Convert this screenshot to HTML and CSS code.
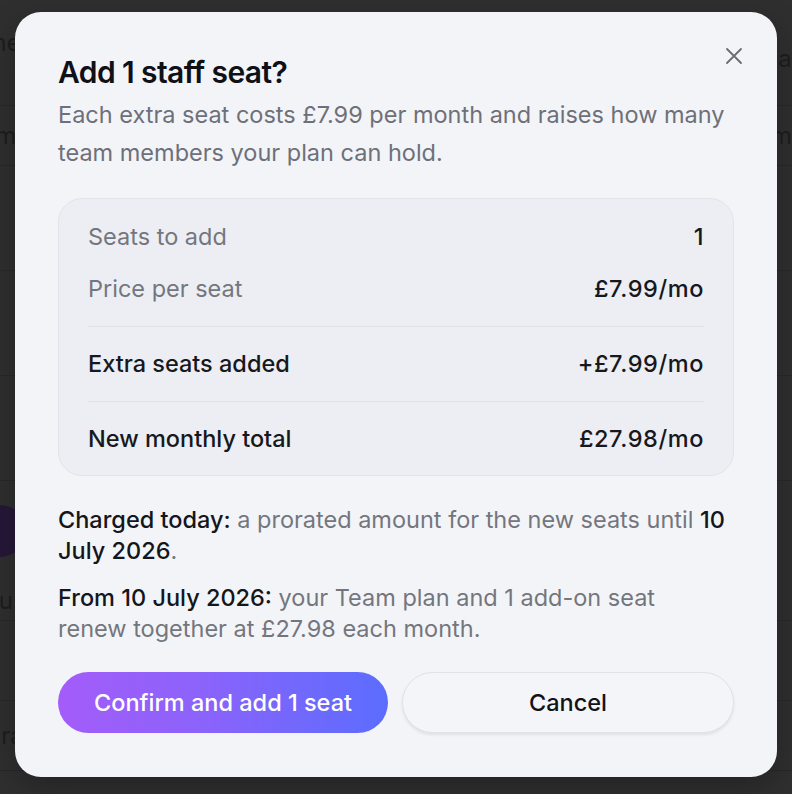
FILE: index.html
```html
<!DOCTYPE html>
<html lang="en">
<head>
    <meta charset="UTF-8">
    <meta name="viewport" content="width=device-width, initial-scale=1.0">
    <title>Add staff seat</title>
    <link rel="stylesheet" href="styles.css">
</head>
<body>
    <!-- Page behind the dialog, dimmed by the overlay -->
    <div class="page">
        <div class="page-row r1"><span class="two-line">Name<br>Info</span><span>Seats</span></div>
        <div class="page-row r2"><span>Team plan</span><span>Admin</span></div>
        <div class="page-row r3"><span></span><span></span></div>
        <div class="page-row r3"><span></span><span></span></div>
        <div class="page-row r3"><span></span><span></span></div>
        <div class="page-row r-avatar no-line"><span class="avatar"></span><span></span></div>
        <div class="page-row r-status"><span>Status</span><span></span></div>
        <div class="page-row r4"><span></span><span></span></div>
        <div class="page-row r5"><span>Upgrade</span><span></span></div>
    </div>

    <div class="overlay">
        <div class="modal" role="dialog" aria-labelledby="modal-title">
            <button class="close" aria-label="Close">
                <svg width="18" height="18" viewBox="0 0 18 18" fill="none">
                    <path d="M2 2L16 16M16 2L2 16" stroke="currentColor" stroke-width="1.8" stroke-linecap="round"/>
                </svg>
            </button>

            <h2 id="modal-title" class="modal-title">Add 1 staff seat?</h2>
            <p class="modal-desc">Each extra seat costs £7.99 per month and raises how many team members your plan can hold.</p>

            <div class="summary">
                <div class="summary-row muted">
                    <span>Seats to add</span>
                    <span class="value">1</span>
                </div>
                <div class="summary-row muted spaced">
                    <span>Price per seat</span>
                    <span class="value">£7.99/mo</span>
                </div>
                <div class="divider"></div>
                <div class="summary-row strong">
                    <span>Extra seats added</span>
                    <span class="value">+£7.99/mo</span>
                </div>
                <div class="divider"></div>
                <div class="summary-row strong">
                    <span>New monthly total</span>
                    <span class="value">£27.98/mo</span>
                </div>
            </div>

            <p class="note"><b>Charged today:</b> a prorated amount for the new seats until <b>10 July 2026</b>.</p>
            <p class="note second"><b>From 10 July 2026:</b> your Team plan and 1 add-on seat<br>renew together at £27.98 each month.</p>

            <div class="actions">
                <button class="btn btn-primary">Confirm and add 1 seat</button>
                <button class="btn btn-secondary">Cancel</button>
            </div>
        </div>
    </div>
</body>
</html>
```

FILE: styles.css
```css
* {
    margin: 0;
    padding: 0;
    box-sizing: border-box;
}

body {
    font-family: Inter, "Noto Sans", Arial, sans-serif;
    background-color: #3a3a3a;
    width: 792px;
    height: 794px;
    overflow: hidden;
    position: relative;
}

/* Background page */
.page {
    padding-top: 12px;
}

.page-row {
    display: flex;
    justify-content: space-between;
    align-items: center;
    border-bottom: 1px solid #2f2f2f;
    font-size: 24px;
    color: #1e1e1e;
}

.page-row.no-line {
    border-bottom: none;
}

.r1 { height: 94px; }
.r2 { height: 60px; }
.r3 { height: 105px; }
.r-avatar { height: 100px; }
.r-status { height: 40px; }
.r4 { height: 80px; }
.r5 { height: 70px; }

.two-line {
    line-height: 32px;
}

.page-row span:first-child {
    margin-left: -46px;
}

.page-row span:last-child {
    margin-right: -20px;
}

.avatar {
    width: 52px;
    height: 52px;
    border-radius: 50%;
    background: #2a1648;
    margin-left: -26px !important;
}

/* Overlay + dialog */
.overlay {
    position: absolute;
    inset: 0;
    background: rgba(30, 30, 30, 0.35);
    display: flex;
    justify-content: center;
    align-items: flex-start;
    padding-top: 12px;
}

.modal {
    position: relative;
    width: 762px;
    height: 765px;
    background: #f3f4f8;
    border-radius: 26px;
    padding: 42px 43px 43px;
    box-shadow: 0 10px 30px rgba(0, 0, 0, 0.25);
}

.close {
    position: absolute;
    top: 35px;
    right: 34px;
    width: 18px;
    height: 18px;
    background: none;
    border: none;
    color: #6b6b70;
    cursor: pointer;
    display: flex;
}

.modal-title {
    font-size: 30px;
    line-height: 36px;
    font-weight: 600;
    letter-spacing: -0.02em;
    color: #0f1117;
}

.modal-desc {
    margin-top: 6px;
    font-size: 23.5px;
    line-height: 38px;
    color: #6e7079;
}

.summary {
    margin-top: 26px;
    background: #eceef3;
    border: 1px solid #e2e4e9;
    border-radius: 24px;
    padding: 21px 29px 19px;
}

.summary-row {
    display: flex;
    justify-content: space-between;
    align-items: center;
    font-size: 23.5px;
    line-height: 34px;
}

.summary-row.muted {
    color: #74767e;
}

.summary-row.muted .value {
    color: #16181d;
}

.summary-row.spaced {
    margin-top: 18px;
}

.summary-row.strong {
    color: #16181d;
    font-weight: 500;
}

.summary-row .value {
    font-weight: 500;
    letter-spacing: 0.025em;
}

.divider {
    height: 1px;
    background: #dfe1e6;
    margin: 20px 0;
}

.note {
    margin-top: 28px;
    font-size: 23.5px;
    line-height: 31px;
    color: #74767e;
}

.note b {
    font-weight: 500;
    color: #14161b;
}

.note.second {
    margin-top: 16px;
}

.actions {
    margin-top: 28px;
    display: flex;
    gap: 14px;
}

.btn {
    flex: 1;
    height: 61px;
    border-radius: 31px;
    font-family: inherit;
    font-size: 23.5px;
    font-weight: 500;
    cursor: pointer;
}

.btn-primary {
    border: none;
    color: #fff;
    background: linear-gradient(90deg, #a45cf9 0%, #8a63fb 45%, #5b6dfe 100%);
}

.btn-secondary {
    background: #f4f5f9;
    color: #111318;
    border: 1px solid #e1e2e7;
    box-shadow: 0 2px 3px rgba(0, 0, 0, 0.08);
}
```
